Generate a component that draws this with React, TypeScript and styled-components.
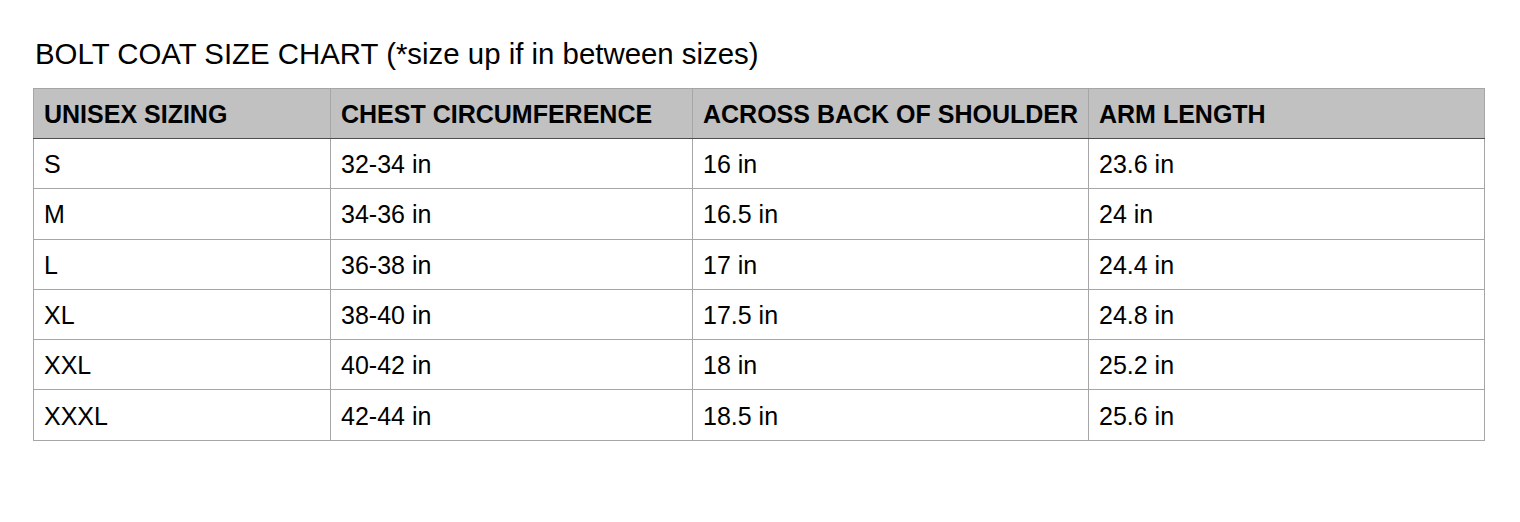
import styled, { createGlobalStyle } from 'styled-components';

const GlobalStyle = createGlobalStyle`
  body {
    margin: 0;
    background: #ffffff;
    font-family: "Liberation Sans", Arial, Helvetica, sans-serif;
    color: #000000;
  }
`;

const Page = styled.div`
  padding: 36px 0 0 33px;
`;

const Title = styled.h1`
  margin: 0 0 0 2px;
  font-size: 29.4px;
  font-weight: 400;
  line-height: 36px;
  height: 52px;
`;

const Table = styled.table`
  width: 1451px;
  border-collapse: collapse;
  table-layout: fixed;
`;

const HeadCell = styled.th`
  background: #c0c1c0;
  border: 1px solid #a6a6a6;
  border-bottom: 1px solid #4d4d4d;
  height: 50px;
  padding: 2px 10px 0;
  text-align: left;
  font-size: 25px;
  font-weight: 700;
  white-space: nowrap;
  box-sizing: border-box;
`;

const Cell = styled.td`
  border: 1px solid #a6a6a6;
  height: 50.3px;
  padding: 2px 10px 0;
  font-size: 25px;
  white-space: nowrap;
  box-sizing: border-box;
`;

const columns = [
  { label: 'UNISEX SIZING', width: 297 },
  { label: 'CHEST CIRCUMFERENCE', width: 362 },
  { label: 'ACROSS BACK OF SHOULDER', width: 396 },
  { label: 'ARM LENGTH', width: 396 },
];

const rows = [
  ['S', '32-34 in', '16 in', '23.6 in'],
  ['M', '34-36 in', '16.5 in', '24 in'],
  ['L', '36-38 in', '17 in', '24.4 in'],
  ['XL', '38-40 in', '17.5 in', '24.8 in'],
  ['XXL', '40-42 in', '18 in', '25.2 in'],
  ['XXXL', '42-44 in', '18.5 in', '25.6 in'],
];

export default function App() {
  return (
    <>
      <GlobalStyle />
      <Page>
        <Title>BOLT COAT SIZE CHART (*size up if in between sizes)</Title>
        <Table>
          <colgroup>
            {columns.map(c => (
              <col key={c.label} style={{ width: c.width }} />
            ))}
          </colgroup>
          <thead>
            <tr>
              {columns.map(c => (
                <HeadCell key={c.label}>{c.label}</HeadCell>
              ))}
            </tr>
          </thead>
          <tbody>
            {rows.map(r => (
              <tr key={r[0]}>
                {r.map((v, i) => (
                  <Cell key={i}>{v}</Cell>
                ))}
              </tr>
            ))}
          </tbody>
        </Table>
      </Page>
    </>
  );
}
